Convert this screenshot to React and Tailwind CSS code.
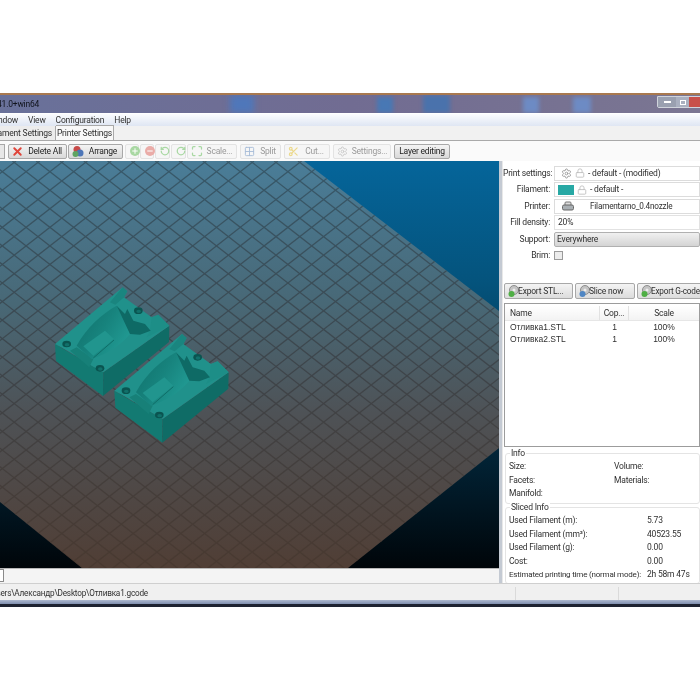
import React from "react";
import { X, Settings, Lock, Plus, Minus, RotateCcw, RotateCw, Maximize, Grid2x2, Scissors } from "lucide-react";

const font = { fontFamily: 'Roboto, "Noto Sans", sans-serif' };

const Tool = ({ w, icon, label, dim }) => (
  <div
    className={`flex items-center h-[15px] border rounded-[2px] shrink-0 ${
      dim ? "border-[#e3e3e3] bg-[#f6f6f6] text-[#9a9a9a]" : "border-[#a8a8a8] bg-gradient-to-b from-[#f4f4f4] to-[#d9d9d9] text-[#222]"
    }`}
    style={{ width: w }}
  >
    {icon && <span className="w-[17px] flex justify-center shrink-0">{icon}</span>}
    {label && <span className="flex-1 text-center pr-[2px] whitespace-nowrap">{label}</span>}
  </div>
);

const Field = ({ label, children }) => (
  <div className="flex items-center h-[16.5px]">
    <div className="w-[47px] text-right shrink-0 whitespace-nowrap">{label}</div>
    <div className="ml-[4px] flex-1 h-[15px] flex items-center">{children}</div>
  </div>
);

const ExportIcon = ({ color }) => (
  <svg width="14" height="14" viewBox="0 0 14 14" className="shrink-0">
    <circle cx="7" cy="6" r="4.5" fill="#c4c4c4" stroke="#8d8d8d" />
    <circle cx="7" cy="6" r="1.5" fill="#eee" />
    <circle cx="4.5" cy="10" r="3" fill={color} />
  </svg>
);

const Hole = ({ x, y }) => (
  <g>
    <ellipse cx={x} cy={y} rx="13" ry="10" fill="#0a5450" />
    <ellipse cx={x + 1} cy={y + 2} rx="7" ry="5" fill="#11706a" />
  </g>
);

const Mold = ({ dx, dy }) => (
  <g transform={`translate(${dx} ${dy})`}>
    {/* sides */}
    <polygon points="15,180 18,231 159,336 160,265" fill="#137a72" />
    <polygon points="160,265 159,336 357,174 358,125" fill="#0f6c66" />
    {/* top face */}
    <polygon points="15,180 218,10 232,22 222,40 305,100 325,92 358,125 160,265 125,245 60,205" fill="#20918b" />
    {/* end grooves */}
    <polygon points="218,10 232,22 222,40 196,62 180,55" fill="#1a857f" />
    <polygon points="305,100 325,92 358,125 290,160 300,140" fill="#1d8e87" />
    <polygon points="60,200 80,190 130,225 118,250" fill="#178078" />
    {/* cavity */}
    <path d="M80 185 C110 130 155 90 200 65 L240 150 C205 190 170 210 125 225 Z" fill="url(#cav)" />
    <path d="M200 65 L225 90 L232 75 L250 110 L285 120 L302 140 L270 152 L240 150 Z" fill="#0e6a65" />
    <polygon points="100,187 165,140 192,165 130,215" fill="#21958e" />
    <path d="M130 222 L192 168" stroke="#0f6d67" strokeWidth="3" fill="none" />
    <Hole x={50} y={180} />
    <Hole x={150} y={253} />
    <Hole x={265} y={80} />
  </g>
);

const Viewport = () => {
  const step = 23.8;
  const lines = [];
  for (let i = -40; i < 60; i++) {
    const a = 12.4 + i * step;
    const b = 63.6 + i * step;
    lines.push(<line key={`a${i}`} x1={a} y1={0} x2={a + 540} y2={421} />);
    lines.push(<line key={`b${i}`} x1={b} y1={0} x2={b - 540} y2={421} />);
  }
  return (
    <svg width="499" height="407" viewBox="0 0 499 407" className="block">
      <defs>
        <linearGradient id="sky" x1="0" y1="0" x2="0" y2="1">
          <stop offset="0" stopColor="#05659a" />
          <stop offset="0.3" stopColor="#04537c" />
          <stop offset="0.7" stopColor="#02263a" />
          <stop offset="1" stopColor="#000509" />
        </linearGradient>
        <linearGradient id="plate" x1="0" y1="0" x2="0" y2="1">
          <stop offset="0" stopColor="#4a7d98" />
          <stop offset="0.35" stopColor="#486876" />
          <stop offset="0.62" stopColor="#4e5256" />
          <stop offset="1" stopColor="#503e35" />
        </linearGradient>
        <linearGradient id="gridline" gradientUnits="userSpaceOnUse" x1="0" y1="0" x2="0" y2="407">
          <stop offset="0" stopColor="#33505f" />
          <stop offset="0.5" stopColor="#3b4045" />
          <stop offset="1" stopColor="#47382f" />
        </linearGradient>
        <linearGradient id="cav" x1="0" y1="0" x2="1" y2="0.6">
          <stop offset="0" stopColor="#0f6f6a" />
          <stop offset="0.55" stopColor="#17837d" />
          <stop offset="1" stopColor="#219a93" />
        </linearGradient>
        <clipPath id="plateClip">
          <polygon points="0,0 304,0 499,150 499,287 348,407 82,407 0,341" />
        </clipPath>
      </defs>
      <rect width="499" height="407" fill="url(#sky)" />
      <g clipPath="url(#plateClip)">
        <rect width="499" height="407" fill="url(#plate)" />
        <g stroke="url(#gridline)" strokeWidth="1.3" opacity="0.8">{lines}</g>
      </g>
      <g transform="translate(50 123) scale(0.3333)">
        <Mold dx={0} dy={0} />
        <Mold dx={178} dy={140} />
      </g>
    </svg>
  );
};

export default function App() {
  return (
    <div className="w-[700px] h-[700px] bg-white overflow-hidden flex flex-col text-[8.5px] tracking-[-0.2px] text-[#303030] blur-[0.5px]" style={font}>
      <div className="h-[93px] shrink-0" />
      <div className="h-[2px] bg-[#a9794f] shrink-0" />

      {/* title bar */}
      <div className="h-[18px] shrink-0 relative flex items-center bg-gradient-to-r from-[#69719a] via-[#716c92] to-[#7b7692] text-[#10131c] overflow-hidden">
        <span className="-ml-[3px] relative">41.0+win64</span>
        <div className="absolute left-[230px] top-0 w-[24px] h-[18px] bg-[#4f77ba] blur-[3px]" />
        <div className="absolute left-[377px] top-[2px] w-[16px] h-[16px] bg-[#4878b4] blur-[2px]" />
        <div className="absolute left-[423px] top-0 w-[27px] h-[18px] bg-[#4a72ac] blur-[2px]" />
        <div className="absolute left-[523px] top-[2px] w-[16px] h-[16px] bg-[#6d8bc4] blur-[2px]" />
        <div className="absolute left-[573px] top-[2px] w-[18px] h-[16px] bg-[#6d8bc4] blur-[2px]" />
        <div className="absolute left-[657px] top-[1px] flex h-[12px] rounded-b-[2px] border border-[#d0d4dc] overflow-hidden">
          <div className="w-[18px] flex items-center justify-center bg-[#9aa0b0]"><div className="w-[7px] h-[2px] bg-white" /></div>
          <div className="w-[13px] flex items-center justify-center bg-[#aab0c0]"><div className="w-[6px] h-[5px] border border-white" /></div>
          <div className="w-[12px] bg-[#c8504a]" />
        </div>
      </div>

      {/* menu bar */}
      <div className="h-[13px] shrink-0 flex items-center gap-[10px] border-t border-white bg-gradient-to-b from-[#fbfcfe] to-[#dfe6f3] whitespace-nowrap">
        <span className="w-[18px] flex justify-end overflow-hidden"><span>Window</span></span>
        <span>View</span>
        <span>Configuration</span>
        <span>Help</span>
      </div>

      {/* tabs */}
      <div className="h-[15px] shrink-0 flex items-end bg-[#f1f1f1] border-b border-[#a9a9a9] whitespace-nowrap">
        <div className="w-[56px] h-[14px] flex justify-end items-center pr-[3px] overflow-hidden border-r border-[#a9a9a9] bg-[#ececec]"><span>Filament Settings</span></div>
        <div className="w-[58px] h-[15px] flex justify-center items-center border-t border-r border-[#a9a9a9] bg-[#f8f8f8]">Printer Settings</div>
      </div>

      {/* toolbar */}
      <div className="h-[20px] shrink-0 flex items-center bg-[#fafafa]">
        <div className="w-[5px] h-[15px] border border-l-0 border-[#a8a8a8] bg-[#e8e8e8] shrink-0" />
        <div className="ml-[3px] flex items-center gap-[1px]">
          <Tool w={59} icon={<X size={13} strokeWidth={3.5} className="text-[#e0453a]" />} label="Delete All" />
          <Tool w={55} label="Arrange" icon={
            <svg width="14" height="13" viewBox="0 0 14 13">
              <circle cx="6" cy="4.5" r="3.5" fill="#c84a48" />
              <circle cx="9" cy="8" r="3.5" fill="#4d76b8" />
              <circle cx="4.5" cy="9" r="3" fill="#5fa463" />
            </svg>
          } />
        </div>
        <div className="ml-[2px] flex items-center gap-[1px]">
          <Tool w={14} dim icon={<span className="w-[10px] h-[10px] rounded-full bg-[#a9d8a3] flex items-center justify-center"><Plus size={8} strokeWidth={3} className="text-white" /></span>} />
          <Tool w={14} dim icon={<span className="w-[10px] h-[10px] rounded-full bg-[#eaaca8] flex items-center justify-center"><Minus size={8} strokeWidth={3} className="text-white" /></span>} />
          <Tool w={15} dim icon={<RotateCcw size={10} strokeWidth={3} className="text-[#a9d8a3]" />} />
          <Tool w={15} dim icon={<RotateCw size={10} strokeWidth={3} className="text-[#a9d8a3]" />} />
        </div>
        <div className="ml-[1px] flex items-center gap-[3px]">
          <Tool w={50} dim label="Scale..." icon={<Maximize size={12} strokeWidth={2.5} className="text-[#a9d8a3]" />} />
          <Tool w={41} dim label="Split" icon={<Grid2x2 size={11} className="text-[#a7bcd8]" />} />
          <Tool w={46} dim label="Cut..." icon={<Scissors size={11} strokeWidth={2.5} className="text-[#ecd98c]" />} />
          <Tool w={58} dim label="Settings..." icon={<Settings size={11} className="text-[#c9c9c9]" />} />
          <Tool w={56} label={<span className="pl-[2px]">Layer editing</span>} />
        </div>
      </div>

      {/* main */}
      <div className="h-[422px] shrink-0 flex">
        <div className="w-[499px] shrink-0 flex flex-col">
          <Viewport />
          <div className="flex-1 flex bg-[#f4f4f4] border-t border-[#b8b8b8]">
            <div className="w-[4px] h-[13px] border border-l-0 border-[#8a8a8a] rounded-r-[1px] bg-white" />
          </div>
        </div>
        <div className="w-[4px] shrink-0 bg-[#c4cad3] border-r border-[#e8e8e8]" />
        <div className="flex-1 bg-white flex flex-col min-w-0 overflow-hidden">
          <div className="pt-[4px] flex flex-col">
            <Field label="Print settings:">
              <div className="w-full h-full border border-[#dcdcdc] flex items-center pl-[6px] gap-[3px]">
                <Settings size={11} className="text-[#9a9a9a]" />
                <Lock size={10} className="text-[#bcbcbc]" />
                <span className="whitespace-nowrap">- default - (modified)</span>
              </div>
            </Field>
            <Field label="Filament:">
              <div className="w-full h-full border border-[#dcdcdc] flex items-center pl-[3px] gap-[3px]">
                <div className="w-[16px] h-[10px] bg-[#27a8a4] shrink-0" />
                <Lock size={10} className="text-[#bcbcbc]" />
                <span className="whitespace-nowrap">- default -</span>
              </div>
            </Field>
            <Field label="Printer:">
              <div className="w-full h-full border border-[#dcdcdc] flex items-center pl-[7px]">
                <svg width="12" height="10" viewBox="0 0 12 10" className="shrink-0">
                  <rect x="3" y="1" width="6" height="4" rx="1" fill="#ddd" stroke="#777" />
                  <rect x="0.5" y="4" width="11" height="5" rx="1.5" fill="#aab0b4" stroke="#666" />
                </svg>
                <span className="ml-[16px] whitespace-nowrap text-[8.2px]">Filamentarno_0.4nozzle</span>
              </div>
            </Field>
            <Field label="Fill density:">
              <div className="w-full h-full border border-[#e2e2e2] flex items-center pl-[3px]">20%</div>
            </Field>
            <Field label="Support:">
              <div className="w-[calc(100%+10px)] h-full border border-[#b0b0b0] rounded-[2px] flex items-center pl-[2px] bg-gradient-to-b from-[#f0f0f0] to-[#d4d4d4]">Everywhere</div>
            </Field>
            <Field label="Brim:">
              <div className="w-[9px] h-[9px] border border-[#9a9a9a] bg-[#ececec]" />
            </Field>
          </div>

          {/* export buttons */}
          <div className="mt-[19px] ml-[1px] flex gap-[2px] h-[18px]">
            <div className="w-[69px] shrink-0 flex items-center pl-[2px] border border-[#a8a8a8] rounded-[2px] bg-gradient-to-b from-[#f4f4f4] to-[#dcdcdc] whitespace-nowrap">
              <ExportIcon color="#4faf45" /><span className="-ml-[3px]">Export STL...</span>
            </div>
            <div className="w-[60px] shrink-0 flex items-center pl-[2px] border border-[#a8a8a8] rounded-[2px] bg-gradient-to-b from-[#f4f4f4] to-[#dcdcdc] whitespace-nowrap">
              <ExportIcon color="#4f86c4" /><span className="-ml-[3px]">Slice now</span>
            </div>
            <div className="w-[70px] shrink-0 flex items-center pl-[2px] border border-[#a8a8a8] rounded-[2px] bg-gradient-to-b from-[#f4f4f4] to-[#dcdcdc] whitespace-nowrap overflow-hidden">
              <ExportIcon color="#4faf45" /><span className="-ml-[3px] text-[8.2px]">Export G-code...</span>
            </div>
          </div>

          {/* object list */}
          <div className="mt-[4px] ml-[1px] h-[144px] shrink-0 border border-[#9c9c9c] flex flex-col">
            <div className="mt-[2px] h-[15px] flex items-center border-b border-[#e6e6e6] bg-gradient-to-b from-[#ffffff] to-[#f3f3f3]">
              <div className="w-[95px] pl-[5px] border-r border-[#e2e2e2] h-full flex items-center">Name</div>
              <div className="w-[29px] text-center border-r border-[#e2e2e2] h-full flex items-center justify-center">Cop...</div>
              <div className="flex-1 text-center">Scale</div>
            </div>
            <div>
              {["Отливка1.STL", "Отливка2.STL"].map((name) => (
                <div key={name} className="h-[12.5px] flex items-center tracking-normal" style={{ fontFamily: '"Liberation Sans", sans-serif' }}>
                  <div className="w-[95px] pl-[5px]">{name}</div>
                  <div className="w-[29px] text-center">1</div>
                  <div className="flex-1 text-center">100%</div>
                </div>
              ))}
            </div>
          </div>

          {/* info */}
          <div className="mt-[6px] ml-[2px] h-[51px] shrink-0 relative border border-[#e4e4e4] rounded-[3px] pt-[6px] pl-[3px]">
            <span className="absolute left-[4px] -top-[6px] bg-white px-[1px] leading-[11px]">Info</span>
            <div className="grid grid-cols-[105px_1fr] auto-rows-[13.5px] items-center">
              <span>Size:</span><span>Volume:</span>
              <span>Facets:</span><span>Materials:</span>
              <span>Manifold:</span><span />
            </div>
          </div>

          {/* sliced info */}
          <div className="mt-[3px] ml-[2px] h-[77px] shrink-0 relative border border-[#e4e4e4] rounded-[3px] pt-[6px] pl-[3px]">
            <span className="absolute left-[4px] -top-[6px] bg-white px-[1px] leading-[11px]">Sliced Info</span>
            <div className="grid grid-cols-[138px_1fr] auto-rows-[13.5px] items-center whitespace-nowrap">
              <span>Used Filament (m):</span><span>5.73</span>
              <span>Used Filament (mm³):</span><span>40523.55</span>
              <span>Used Filament (g):</span><span>0.00</span>
              <span>Cost:</span><span>0.00</span>
              <span className="text-[8px]">Estimated printing time (normal mode):</span><span>2h 58m 47s</span>
            </div>
          </div>
        </div>
      </div>

      {/* status bar */}
      <div className="h-[17px] shrink-0 flex items-center pt-[3px] border-t border-[#cfcfcf] bg-[#f0f0f0] whitespace-nowrap">
        <div className="w-[148px] flex justify-end overflow-hidden text-[8.2px]"><span>C:\Users\Александр\Desktop\Отливка1.gcode</span></div>
        <div className="ml-[367px] h-full border-l border-[#dadada]" />
        <div className="ml-[102px] h-full border-l border-[#dadada]" />
      </div>

      <div className="h-[4px] shrink-0 bg-gradient-to-b from-[#aeb9cf] to-[#7f8eae]" />
      <div className="h-[3px] shrink-0 bg-[#1d2230]" />
      <div className="flex-1 bg-white" />
    </div>
  );
}
